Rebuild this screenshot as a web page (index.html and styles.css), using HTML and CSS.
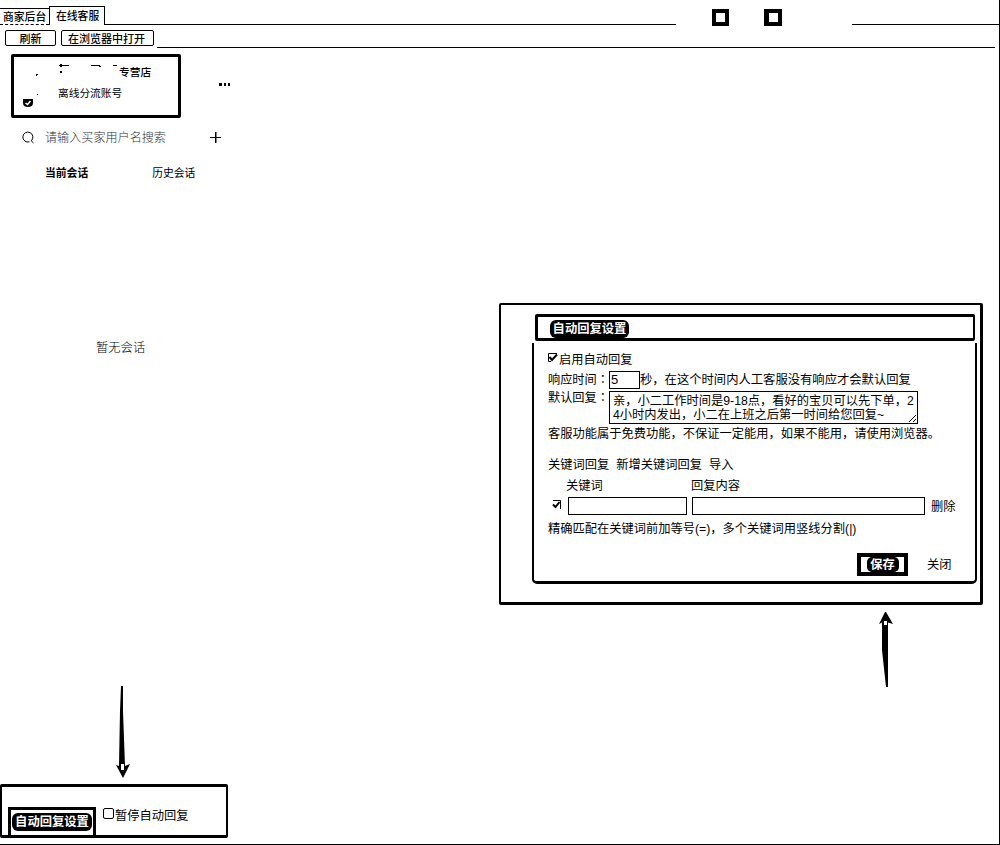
FILE: index.html
```html
<!DOCTYPE html>
<html lang="zh-CN">
<head>
<meta charset="utf-8">
<title>在线客服</title>
<link rel="stylesheet" href="styles.css">
</head>
<body>
<div class="app">
  <header class="tabs">
    <div class="tab">商家后台</div>
    <div class="tab tab-active">在线客服</div>
    <div class="tabs-line"></div>
    <div class="window-buttons"><span class="square"></span><span class="square square-wide"></span></div>
    <div class="tabs-line-end"></div>
  </header>
  <div class="toolbar">
    <button class="tool tool-refresh">刷新</button>
    <button class="tool tool-open">在浏览器中打开</button>
    <div class="toolbar-line"></div>
  </div>
  <aside class="sidebar">
    <div class="account-row">
      <section class="account">
        <div class="avatar">
          <svg width="24" height="40" viewBox="0 0 24 40"><path d="M13 2H15V3H14V4H13ZM14 22H15V23H14Z"/><path d="M0 27H10V31Q10 35 5 35Q0 35 0 31Z"/><path d="M2.500 31L4.500 32.500L7.500 29" fill="none" stroke="#fff" stroke-width="1.500"/></svg>
        </div>
        <div class="account-info">
          <div class="shop"><svg width="61" height="12" viewBox="0 0 61 12"><path d="M1 1H11V2H1ZM2 0H4V3H2ZM2 7H4V9H2ZM33 1H42V2H33ZM41 2H43V3H41ZM55 1H59V2H55Z"/></svg><span>专营店</span></div>
          <div class="account-kind">离线分流账号</div>
        </div>
      </section>
      <svg class="more" width="12" height="4" viewBox="0 0 12 4"><path d="M0 0H3V3H0ZM5 0H7V3H5ZM9 0H11V3H9Z"/></svg>
    </div>
    <div class="search">
      <svg width="13" height="13" viewBox="0 0 13 13"><path d="M7.5 10.8A5 5 0 1 1 9.2 9.8L11.5 12" fill="none" stroke="#000"/></svg>
      <span class="placeholder">请输入买家用户名搜索</span>
      <svg width="11" height="11" viewBox="0 0 11 11"><path d="M0 5H11V6H0ZM5 0H6.5V11H5Z"/></svg>
    </div>
    <nav class="sessions"><span class="session-current">当前会话</span><span>历史会话</span></nav>
    <div class="empty">暂无会话</div>
  </aside>

  <section class="dialog-frame">
    <div class="dialog-head"><span class="knockout">自动回复设置</span></div>
    <div class="dialog">
      <div class="row enable"><svg class="check" width="10" height="10" viewBox="0 0 10 10"><path d="M9 0.5H0.5V8.5H3" fill="none" stroke="#000"/><path d="M1.5 4L4 7L9 1.5" fill="none" stroke="#000" stroke-width="2"/></svg>启用自动回复</div>
      <div class="row delay"><span class="label">响应时间<span class="colon" lang="zh-TW">：</span></span><span class="seconds">5</span>秒，在这个时间内人工客服没有响应才会默认回复</div>
      <div class="default-reply"><span class="label label-reply">默认回复<span class="colon" lang="zh-TW">：</span></span>
        <div class="message"><div class="message-text">亲，小二工作时间是9-18点，看好的宝贝可以先下单，24小时内发出，小二在上班之后第一时间给您回复~</div>
          <svg class="grip" width="9" height="9" viewBox="0 0 9 9"><path d="M1 8L8 1M5 8L8 5" stroke="#000"/></svg></div></div>
      <div class="row note">客服功能属于免费功能，不保证一定能用，如果不能用，请使用浏览器。</div>
      <div class="row links"><span>关键词回复</span><span>新增关键词回复</span><span>导入</span></div>
      <div class="row columns"><span class="col-key">关键词</span><span>回复内容</span></div>
      <div class="rule"><svg class="check" width="10" height="10" viewBox="0 0 10 10"><path d="M1 .5H8.5V9" fill="none" stroke="#000"/><path d="M1 4.5L3.5 7L7.5 2" fill="none" stroke="#000" stroke-width="2"/></svg><span class="field field-key"></span><span class="field field-content"></span><span class="delete">删除</span></div>
      <div class="row hint">精确匹配在关键词前加等号(=)，多个关键词用竖线分割(|)</div>
      <div class="actions"><button class="save"><span class="save-text">保存</span></button><span>关闭</span></div>
    </div>
  </section>

  <svg class="arrow arrow-up" width="16" height="76" viewBox="0 0 16 76"><path d="M6 0H7L14 12L9 10.500V75H7L3 38V10.500L0 12L3 6Z"/><path d="M5 9H8V13H5Z" fill="#fff"/></svg>
  <svg class="arrow arrow-down" width="15" height="93" viewBox="0 0 15 93"><path d="M5 0H7V25L9 80L14 78L7 92L0 79L3 80L4 25Z"/><path d="M5 78H8V84H5Z" fill="#fff"/></svg>

  <footer class="reply-bar">
    <div class="settings-button"><span class="knockout knockout-small">自动回复设置</span></div>
    <label class="pause"><span class="box"></span>暂停自动回复</label>
  </footer>
</div>
</body>
</html>
```
FILE: styles.css
```css
* { box-sizing: border-box; }
body { margin: 0; background: #fff; color: #000; font-family: "Noto Sans CJK SC", sans-serif; }
svg { display: block; flex: none; }
button { font: inherit; color: inherit; }
.app { position: relative; width: 1000px; height: 845px; overflow: hidden; border-right: 1px solid #000; border-bottom: 1px solid #000; }
.tabs { display: flex; height: 25px; padding-top: 6px; align-items: flex-end; font-size: 10.8px; line-height: 15px; }
.tab { width: 49px; height: 17px; padding-left: 3px; border-top: 1px solid #000; border-bottom: 1px dashed #000; white-space: nowrap; font-weight: 500; }
.tab-active { width: 56px; height: 19px; padding-left: 6px; border: 1px solid #000; border-bottom: 0; line-height: 16px; }
.tabs-line { width: 571px; height: 1px; background: #000; }
.window-buttons { display: flex; gap: 35px; width: 176px; height: 16px; padding-left: 36px; }
.square { width: 17px; height: 17px; border: 4px solid #000; }
.square-wide { width: 18px; border-left-width: 5px; }
.tabs-line-end { flex: 1; height: 1px; background: #000; }
.toolbar { display: flex; height: 23px; padding: 5px 4px 0 5px; font-size: 11px; }
.tool { height: 16px; padding: 0; border: 1px solid #000; border-radius: 2px; background: #fff; line-height: 14px; font-weight: 500; white-space: nowrap; }
.tool-refresh { width: 51px; margin-right: 5px; }
.tool-open { width: 93px; margin-right: 3px; padding-right: 2px; }
.toolbar-line { flex: 1; align-self: flex-end; height: 1px; background: #000; }
.sidebar { width: 240px; padding: 6px 0 0 11px; }
.account-row { display: flex; }
.account { display: flex; width: 170px; height: 64px; border: 3px solid #000; border-radius: 2px; }
.avatar { width: 44px; padding: 15px 0 0 9px; }
.account-info { font-size: 10.7px; line-height: 16px; white-space: nowrap; }
.shop { display: flex; padding-top: 7px; font-weight: 500; }
.account-kind { padding-top: 5px; }
.more { margin: 29px 0 0 38px; }
.search { display: flex; align-items: center; margin-top: 11px; height: 16px; padding-left: 11px; }
.placeholder { width: 175px; padding-left: 10px; font-size: 12.1px; font-weight: 300; line-height: 16px; color: #333; }
.sessions { display: flex; gap: 64px; margin-top: 18px; padding-left: 34px; font-size: 10.8px; line-height: 18px; }
.session-current { font-weight: 700; }
.empty { margin-top: 157px; padding-left: 85px; font-size: 12.3px; font-weight: 300; line-height: 18px; }
.dialog-frame { position: absolute; left: 499px; top: 303px; width: 484px; height: 302px; padding: 9px 4px 0 31px; border: solid #000; border-width: 2px 3px 3px 2px; border-radius: 2px; font-size: 12.25px; }
.dialog-head { width: 440px; height: 27px; margin-left: 3px; padding: 3px 0 0 12px; border: solid #000; border-width: 3px 2px 3px 3px; border-radius: 2px; }
.knockout { display: block; width: 79px; height: 18px; border-radius: 6px; background: #000; color: #fff; font-size: 12.3px; line-height: 17px; font-weight: 700; text-align: center; white-space: nowrap; }
.dialog { width: 445px; height: 241px; margin-top: 2px; padding: 7px 0 0 14px; border: solid #000; border-width: 0 2px 3px; border-radius: 0 0 5px 5px; white-space: nowrap; }
.row { display: flex; height: 18px; line-height: 18px; }
.enable .check { margin: 3px 1px 0 0; }
.delay { margin-top: 3px; height: 17px; line-height: 17px; font-size: 12.32px; }
.label { flex: none; width: 61px; font-size: 12.2px; }
.label-reply { line-height: 13px; }
.colon { font-family: "Noto Sans CJK TC", sans-serif; }
.seconds { width: 31px; height: 18px; padding-left: 1px; border: 1px solid #000; font-family: "Liberation Sans", sans-serif; font-size: 13px; line-height: 16px; }
.default-reply { display: flex; margin-top: 3px; height: 33px; }
.message { position: relative; width: 309px; height: 33px; padding: 2px 0 0 3px; border: 1px solid #000; line-height: 14px; }
.message-text { width: 304px; white-space: normal; word-break: break-all; font-family: "Liberation Sans", "Noto Sans CJK SC", sans-serif; }
.grip { position: absolute; right: 0; bottom: 0; }
.links { gap: 7px; margin-top: 13px; }
.columns { margin-top: 3px; padding-left: 18px; }
.col-key { width: 125px; }
.rule { display: flex; height: 18px; margin-top: 3px; padding-left: 4px; }
.rule .check { margin: 3px 6px 0 0; }
.field { height: 18px; border: 1px solid #000; }
.field-key { width: 119px; margin-right: 5px; }
.field-content { width: 233px; margin-right: 6px; }
.delete { line-height: 19px; }
.hint { margin-top: 5px; font-family: "Liberation Sans", "Noto Sans CJK SC", sans-serif; }
.actions { display: flex; gap: 19px; margin-top: 15px; padding-left: 309px; line-height: 22px; }
.save { display: flex; justify-content: center; width: 51px; height: 23px; padding: 0; border: 4px solid #000; background: #fff; color: #fff; font-weight: 700; line-height: 14px; }
.save-text { width: 32px; height: 15px; border-radius: 5px; background: #000; }
.arrow { position: absolute; }
.arrow-up { left: 879px; top: 612px; }
.arrow-down { left: 116px; top: 686px; }
.reply-bar { position: absolute; left: 0; top: 784px; display: flex; width: 228px; height: 54px; padding: 20px 0 0 6px; border: solid #000; border-width: 3px 2px 3px 2px; border-radius: 2px; font-size: 12.25px; }
.settings-button { width: 88px; height: 28px; padding: 3px 0 0 1px; border: 3px solid #000; border-bottom: 0; }
.knockout-small { width: 80px; }
.pause { display: flex; height: 18px; margin-left: 7px; line-height: 16px; white-space: nowrap; }
.box { width: 11px; height: 11px; margin: 1px 1px 0 0; border: 1px solid #000; border-radius: 2px; }
```
